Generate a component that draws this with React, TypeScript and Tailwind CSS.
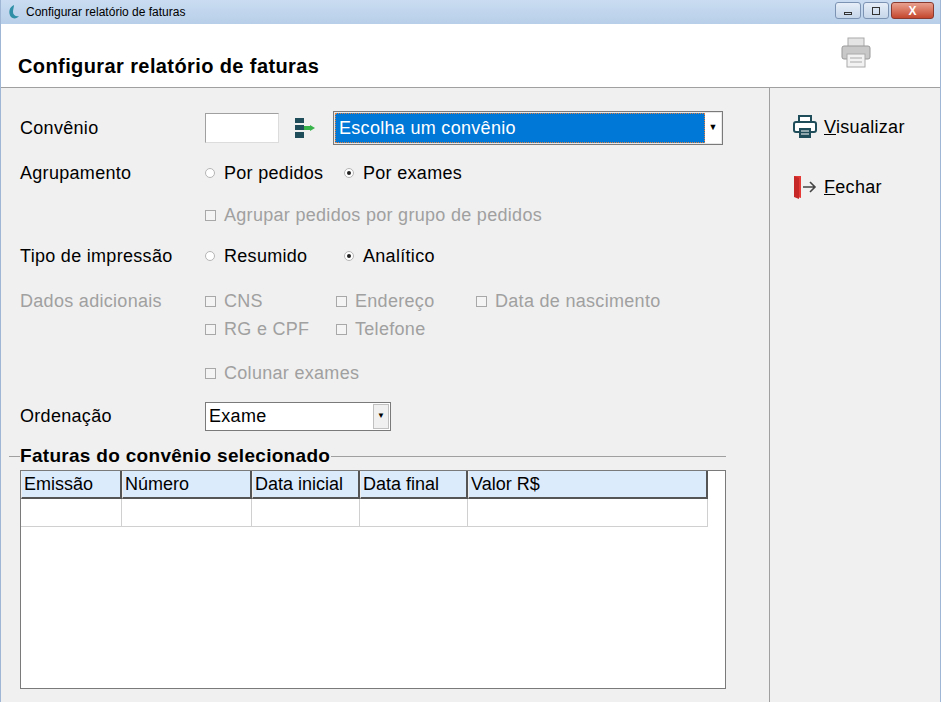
import React from 'react';

const font = { fontFamily: '"Liberation Sans", Arial, sans-serif' };

const Radio = ({ checked }: { checked?: boolean }) => (
  <span className="w-[10px] h-[10px] rounded-full border border-[#b5b5b5] bg-white flex items-center justify-center mr-[9px] shrink-0">
    {checked && <span className="w-[4px] h-[4px] rounded-full bg-[#222]" />}
  </span>
);

const Check = () => (
  <span className="w-[11px] h-[11px] border border-[#a8a8a8] bg-[#f4f4f4] mr-[8px] shrink-0" />
);

const Row = ({ label, h, dim, children }: { label: string; h: number; dim?: boolean; children?: React.ReactNode }) => (
  <div className="flex items-center" style={{ height: h }}>
    <div className={`w-[185px] shrink-0 ${dim ? 'text-[#a0a0a0]' : 'text-black'}`}>{label}</div>
    {children}
  </div>
);

const cols = [
  { t: 'Emissão', w: 101 },
  { t: 'Número', w: 130 },
  { t: 'Data inicial', w: 108 },
  { t: 'Data final', w: 108 },
  { t: 'Valor R$', w: 240 },
];

export default function App() {
  return (
    <div className="w-[941px] h-[702px] flex flex-col bg-[#f0f0f0] text-[18px] tracking-[0.3px] overflow-hidden border-x border-[#9fb7d4]" style={font}>
      {/* title bar */}
      <div className="h-[24px] bg-gradient-to-b from-[#c9dcf1] to-[#b8cfe9] flex items-center px-[6px] shrink-0 tracking-normal">
        <svg width="13" height="16" viewBox="0 0 13 16" className="mr-[6px]">
          <path d="M7 1 C2 3 1 9 4 13 C6 15 10 15 12 12 C9 13 6 11 6 8 C6 5 7 3 7 1Z" fill="#2e8fa6" />
        </svg>
        <span className="text-[12px] text-black">Configurar relatório de faturas</span>
        <div className="ml-auto flex gap-[2px] items-start h-full pt-[2px]">
          <div className="w-[26px] h-[17px] rounded-[3px] border border-[#7d93b4] bg-gradient-to-b from-[#e6eef8] to-[#c6d6ea] flex items-center justify-center"><span className="w-[8px] h-[3px] border border-[#333] mt-[5px]" /></div>
          <div className="w-[26px] h-[17px] rounded-[3px] border border-[#7d93b4] bg-gradient-to-b from-[#e6eef8] to-[#c6d6ea] flex items-center justify-center"><span className="w-[8px] h-[8px] border border-[#333]" /></div>
          <div className="w-[43px] h-[17px] rounded-[3px] border border-[#8b3a2f] bg-gradient-to-b from-[#e8a08f] to-[#c4452c] flex items-center justify-center text-white text-[12px] font-bold">X</div>
        </div>
      </div>
      {/* header */}
      <div className="h-[64px] bg-white border-b border-[#a0a0a0] flex items-end justify-between px-[17px] pb-[6px] shrink-0">
        <span className="text-[20px] font-bold text-black tracking-[0.4px]">Configurar relatório de faturas</span>
        <svg width="34" height="34" viewBox="0 0 34 34" className="mb-[12px] mr-[50px]">
          <rect x="9" y="3" width="16" height="9" fill="#e4e4e4" stroke="#aaa" />
          <rect x="3" y="11" width="28" height="13" rx="2" fill="#c8c8c8" stroke="#999" />
          <rect x="8" y="19" width="18" height="13" fill="#f2f2f2" stroke="#aaa" />
          <line x1="11" y1="23" x2="23" y2="23" stroke="#aaa" />
          <line x1="11" y1="27" x2="23" y2="27" stroke="#aaa" />
        </svg>
      </div>
      <div className="flex flex-1 min-h-0">
        {/* left */}
        <div className="w-[769px] border-r border-[#a0a0a0] pl-[19px] pt-[20px] flex flex-col">
          <Row label="Convênio" h={40}>
            <div className="w-[74px] h-[30px] bg-white border border-[#a0a0a0] border-b-[#dcdcdc] border-r-[#dcdcdc]" />
            <svg width="24" height="24" viewBox="0 0 24 24" className="ml-[14px] mr-[16px]">
              <rect x="2" y="2" width="9" height="5" fill="#1f4e5a" />
              <rect x="2" y="9" width="9" height="5" fill="#1f4e5a" />
              <rect x="2" y="16" width="9" height="6" fill="#1f4e5a" />
              <rect x="11" y="10" width="6" height="4" fill="#38b24a" />
              <path d="M17 9 L22 12 L17 15Z" fill="#38b24a" />
            </svg>
            <div className="w-[390px] h-[34px] border border-[#7a7a7a] bg-[#e8e8e8] flex p-[1px]">
              <div className="flex-1 bg-[#0078d7] text-white flex items-center pl-[4px] outline-1 outline-dotted outline-[#e08040] -outline-offset-1">Escolha um convênio</div>
              <div className="w-[16px] flex items-center justify-center text-[9px] text-black bg-white">▼</div>
            </div>
          </Row>
          <Row label="Agrupamento" h={50}>
            <div className="flex items-center w-[139px]"><Radio />Por pedidos</div>
            <div className="flex items-center"><Radio checked />Por exames</div>
          </Row>
          <Row label="" h={34} dim>
            <div className="flex items-center text-[#a0a0a0]"><Check />Agrupar pedidos por grupo de pedidos</div>
          </Row>
          <Row label="Tipo de impressão" h={48}>
            <div className="flex items-center w-[139px]"><Radio />Resumido</div>
            <div className="flex items-center"><Radio checked />Analítico</div>
          </Row>
          <Row label="Dados adicionais" h={42} dim>
            <div className="flex items-center w-[131px] text-[#a0a0a0]"><Check />CNS</div>
            <div className="flex items-center w-[140px] text-[#a0a0a0]"><Check />Endereço</div>
            <div className="flex items-center text-[#a0a0a0]"><Check />Data de nascimento</div>
          </Row>
          <Row label="" h={14}>
            <div className="flex items-center w-[131px] text-[#a0a0a0]"><Check />RG e CPF</div>
            <div className="flex items-center text-[#a0a0a0]"><Check />Telefone</div>
          </Row>
          <Row label="" h={74}>
            <div className="flex items-center text-[#a0a0a0]"><Check />Colunar exames</div>
          </Row>
          <Row label="Ordenação" h={12}>
            <div className="w-[186px] h-[29px] border border-[#7a7a7a] bg-white flex">
              <div className="flex-1 flex items-center pl-[3px]">Exame</div>
              <div className="w-[16px] m-[1px] border border-[#c0c0c0] bg-[#f0f0f0] flex items-center justify-center text-[8px]">▼</div>
            </div>
          </Row>
          <div className="flex items-center mt-[24px] -ml-[11px] w-[717px]">
            <div className="w-[11px] border-t border-[#a0a0a0]" />
            <span className="font-bold text-[19px] leading-[20px] tracking-[0.3px]">Faturas do convênio selecionado</span>
            <div className="flex-1 border-t border-[#a0a0a0] ml-[1px]" />
          </div>
          <div className="mt-[4px] w-[706px] h-[219px] bg-white border border-[#7a7a7a]">
            <div className="flex h-[28px]">
              {cols.map((c) => (
                <div key={c.t} style={{ width: c.w }} className="bg-[#dcebfc] border-r-2 border-b-2 border-[#555] border-l border-l-[#f0f0f0] pl-[2px] flex items-center shrink-0 tracking-normal">{c.t}</div>
              ))}
            </div>
            <div className="flex h-[28px]">
              {cols.map((c) => (
                <div key={c.t} style={{ width: c.w }} className="border-r border-b border-[#d0d0d0] shrink-0" />
              ))}
            </div>
          </div>
        </div>
        {/* right */}
        <div className="flex-1 pl-[22px] pt-[26px] flex flex-col gap-[34px]">
          <div className="flex items-center gap-[6px] h-[26px]">
            <svg width="26" height="26" viewBox="0 0 26 26">
              <rect x="7" y="2" width="12" height="6" fill="#fff" stroke="#1f4e5a" strokeWidth="2" />
              <rect x="2" y="8" width="22" height="10" rx="2" fill="#fff" stroke="#1f4e5a" strokeWidth="2" />
              <rect x="7" y="14" width="12" height="10" fill="#1f4e5a" />
              <line x1="9" y1="17" x2="17" y2="17" stroke="#fff" />
              <line x1="9" y1="20" x2="17" y2="20" stroke="#fff" />
            </svg>
            <span><u>V</u>isualizar</span>
          </div>
          <div className="flex items-center gap-[6px] h-[26px]">
            <svg width="26" height="26" viewBox="0 0 26 26">
              <path d="M2 2 H9 V24 L2 22Z" fill="#e53935" />
              <path d="M2 2 L7 4 V25 L2 23Z" fill="#c62828" />
              <path d="M11 13 H23 M18 8 L23 13 L18 18" fill="none" stroke="#444" strokeWidth="1.6" />
            </svg>
            <span><u>F</u>echar</span>
          </div>
        </div>
      </div>
    </div>
  );
}
